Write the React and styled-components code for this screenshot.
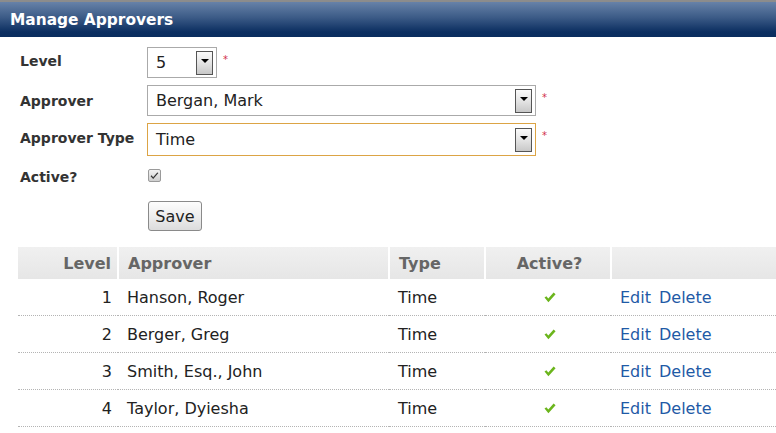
import React from 'react';
import styled, { createGlobalStyle } from 'styled-components';

const GlobalStyle = createGlobalStyle`
    html, body {
        margin: 0;
        padding: 0;
        background: #fff;
        overflow: hidden;
    }
    body {
        font-family: "DejaVu Sans", "Open Sans", sans-serif;
        color: #222;
    }
`

const Page = styled.div`
    width: 776px;
    height: 433px;
    overflow: hidden;
`

const TitleBar = styled.div`
    height: 35px;
    border-top: 2px solid #8c8c8c;
    background: linear-gradient(to bottom, #6782a8 0%, #3b5a86 45%, #0c2f61 85%, #0a2d5e 100%);
    display: flex;
    align-items: center;
    padding-left: 10px;
`

const Title = styled.h2`
    margin: 0;
    color: #fff;
    font-size: 15.4px;
    font-weight: 700;
`

const Form = styled.div`
    display: grid;
    grid-template-columns: 127px 1fr;
    grid-row-gap: 7px;
    padding: 10px 0 0 20px;
`

const Label = styled.div`
    font-size: 14px;
    font-weight: 700;
    color: #333;
    display: flex;
    align-items: center;
    padding-bottom: ${p => p.lift || 0}px;
    margin-top: ${p => p.top || 0}px;
`

const Field = styled.div`
    display: flex;
    align-items: flex-start;
    padding-top: ${p => p.top || 0}px;
`

const Select = styled.div`
    position: relative;
    box-sizing: border-box;
    width: ${p => p.width}px;
    height: ${p => p.tall ? 33 : 31}px;
    border: 1px solid ${p => p.focus ? '#dca445' : '#aaa'};
    background: #fff;
    display: flex;
    align-items: center;
    padding-left: 8px;
    font-size: 16px;
    color: #222;
`

const Arrow = styled.div`
    position: absolute;
    right: 3px;
    top: 50%;
    transform: translateY(-50%);
    box-sizing: border-box;
    width: 17px;
    height: 24px;
    border: 1px solid #555;
    background: linear-gradient(to bottom, #fafafa 0%, #e4e4e4 50%, #c8c8c8 100%);
    display: flex;
    justify-content: center;
    padding-top: 7px;

    &::after {
        content: '';
        width: 0;
        height: 0;
        border-left: 4px solid transparent;
        border-right: 4px solid transparent;
        border-top: 4px solid #000;
    }
`

const Required = styled.span`
    color: #d0304a;
    font-size: 10px;
    margin-left: 6px;
    margin-top: 8px;
    line-height: 1;
`

const Checkbox = styled.span`
    box-sizing: border-box;
    width: 13px;
    height: 13px;
    margin-left: 1px;
    border: 1px solid #9a9a9a;
    border-radius: 2px;
    background: linear-gradient(to bottom, #f2f2f2, #cfcfcf);
    display: flex;
    align-items: center;
    justify-content: center;
`

const Button = styled.button`
    box-sizing: border-box;
    margin-left: 1px;
    width: 54px;
    height: 30px;
    border: 1px solid #8a8a8a;
    border-radius: 3px;
    background: linear-gradient(to bottom, #fdfdfd 0%, #ececec 55%, #dcdcdc 100%);
    font-family: "DejaVu Sans", "Open Sans", sans-serif;
    font-size: 16px;
    color: #222;
    padding: 0;
`

const Table = styled.table`
    margin: 16px 0 0 18px;
    width: 780px;
    border-collapse: collapse;
    table-layout: fixed;
    font-size: 16px;
`

const Th = styled.th`
    height: 32px;
    padding: 0 6px 0 9px;
    background: linear-gradient(to bottom, #f0f0f0, #e6e6e6);
    color: #666;
    font-weight: 700;
    text-align: ${p => p.align || 'left'};
    border-left: 2px solid #fff;

    &:first-child {
        border-left: none;
    }
`

const Td = styled.td`
    height: 36px;
    padding: 0 6px 0 9px;
    text-align: ${p => p.align || 'left'};
    color: #222;
    border-bottom: 1px dotted #b4b4b4;
`

const Link = styled.a`
    color: #1f5aa6;
    text-decoration: none;
    margin-right: 8px;
`

const Check = () => (
    <svg width="12" height="11" viewBox="0 0 12 11">
        <path d="M0.5 5.6 L4.4 10.2 L11.6 2.2 L9.6 0.6 L4.3 6.6 L2.4 4.2 Z" fill="#6bb51c" />
    </svg>
)

const SmallCheck = () => (
    <svg width="9" height="8" viewBox="0 0 9 8">
        <path d="M0.6 4.2 L3.2 7 L8.4 0.9 L7.3 0.4 L3.1 5.3 L1.6 3.3 Z" fill="#333" />
    </svg>
)

const approvers = [
    { level: 1, name: 'Hanson, Roger', type: 'Time' },
    { level: 2, name: 'Berger, Greg', type: 'Time' },
    { level: 3, name: 'Smith, Esq., John', type: 'Time' },
    { level: 4, name: 'Taylor, Dyiesha', type: 'Time' },
]

export default function App() {
    return (
        <Page>
            <GlobalStyle />
            <TitleBar><Title>Manage Approvers</Title></TitleBar>
            <Form>
                <Label lift={4}>Level</Label>
                <Field>
                    <Select width={70}>5<Arrow /></Select>
                    <Required>*</Required>
                </Field>
                <Label>Approver</Label>
                <Field>
                    <Select width={389}>Bergan, Mark<Arrow /></Select>
                    <Required>*</Required>
                </Field>
                <Label lift={4}>Approver Type</Label>
                <Field>
                    <Select width={389} tall focus>Time<Arrow /></Select>
                    <Required>*</Required>
                </Field>
                <Label top={6}>Active?</Label>
                <Field top={6}>
                    <Checkbox><SmallCheck /></Checkbox>
                </Field>
                <div />
                <Field top={9}>
                    <Button>Save</Button>
                </Field>
            </Form>
            <Table>
                <colgroup>
                    <col style={{ width: 100 }} />
                    <col style={{ width: 271 }} />
                    <col style={{ width: 96 }} />
                    <col style={{ width: 126 }} />
                    <col />
                </colgroup>
                <thead>
                    <tr>
                        <Th align="right">Level</Th>
                        <Th>Approver</Th>
                        <Th>Type</Th>
                        <Th align="center">Active?</Th>
                        <Th />
                    </tr>
                </thead>
                <tbody>
                    {approvers.map(a => (
                        <tr key={a.level}>
                            <Td align="right">{a.level}</Td>
                            <Td>{a.name}</Td>
                            <Td>{a.type}</Td>
                            <Td align="center"><Check /></Td>
                            <Td><Link href="#">Edit</Link><Link href="#">Delete</Link></Td>
                        </tr>
                    ))}
                </tbody>
            </Table>
        </Page>
    );
}
